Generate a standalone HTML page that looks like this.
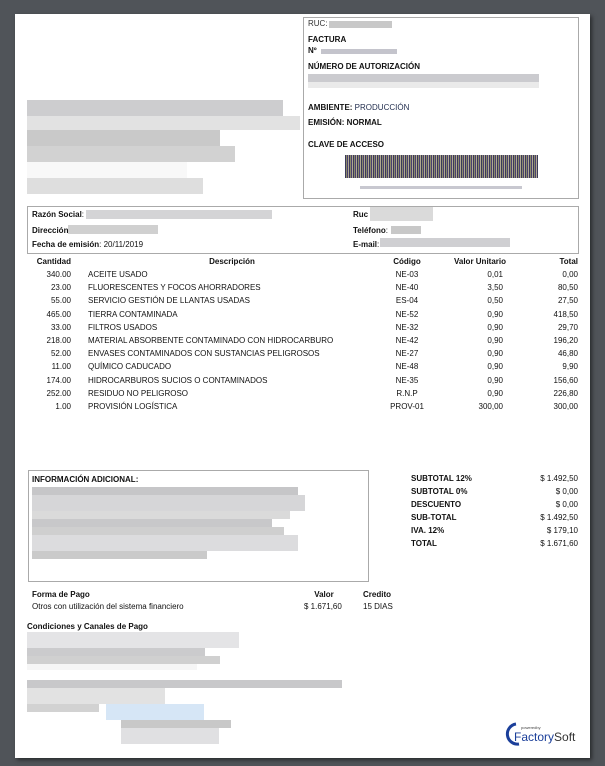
<!DOCTYPE html>
<html><head><meta charset="utf-8"><style>
*{margin:0;padding:0;box-sizing:border-box}
body{width:605px;height:766px;background:#505459;position:relative;overflow:hidden;font-family:"Liberation Sans",sans-serif;font-size:8px;color:#111}
.pg{position:absolute;left:15px;top:14px;width:575px;height:744px;background:#fff;box-shadow:2px 2px 4px rgba(0,0,0,.5)}
.a{position:absolute;white-space:nowrap;line-height:10px}
.b{font-weight:bold}
.r{text-align:right}
.c{text-align:center}
.g{position:absolute}
.box{position:absolute;border:1px solid #aaa}
</style></head><body>
<div class="pg"></div>
<!-- left header blur -->
<div class="g" style="left:27px;top:100px;width:256px;height:16px;background:#cdcdcf"></div>
<div class="g" style="left:27px;top:116px;width:273px;height:14px;background:#e2e2e2"></div>
<div class="g" style="left:27px;top:130px;width:193px;height:16px;background:#c9c9c9"></div>
<div class="g" style="left:27px;top:146px;width:208px;height:16px;background:#d2d2d2"></div>
<div class="g" style="left:27px;top:162px;width:160px;height:16px;background:#f8f8f8"></div>
<div class="g" style="left:27px;top:178px;width:176px;height:16px;background:#dedede"></div>

<div class="box" style="left:303px;top:17px;width:276px;height:182px"></div>
<div class="a" style="left:308px;top:19px;color:#333">RUC:</div>
<div class="g" style="left:329px;top:21px;width:63px;height:7px;background:#c8c8c8"></div>
<div class="a b" style="left:308px;top:35px">FACTURA</div>
<div class="a b" style="left:308px;top:46px">Nº</div>
<div class="g" style="left:321px;top:49px;width:76px;height:5px;background:#c4c4cc"></div>
<div class="a b" style="left:308px;top:62px">NÚMERO DE AUTORIZACIÓN</div>
<div class="g" style="left:308px;top:74px;width:231px;height:8px;background:#cbcbcf"></div>
<div class="g" style="left:308px;top:82px;width:231px;height:6px;background:#eaeaea"></div>
<div class="a" style="left:308px;top:103px;color:#1f2b4c"><b style="color:#111">AMBIENTE:</b> PRODUCCIÓN</div>
<div class="a b" style="left:308px;top:118px">EMISIÓN: NORMAL</div>
<div class="a b" style="left:308px;top:140px">CLAVE DE ACCESO</div>
<div class="g" style="left:345px;top:155px;width:193px;height:23px;background:repeating-linear-gradient(90deg,#3a3a5a 0 1px,#8a8a6a 1px 2px,#4a4070 2px 3px,#b0a890 3px 4px)"></div>
<div class="g" style="left:360px;top:186px;width:162px;height:3px;background:#c8c8d0"></div>

<div class="box" style="left:27px;top:206px;width:552px;height:48px"></div>
<div class="a" style="left:32px;top:210px"><b>Razón Social</b>:</div>
<div class="g" style="left:86px;top:210px;width:186px;height:9px;background:#d4d4d6"></div>
<div class="a" style="left:32px;top:226px"><b>Dirección</b>:</div>
<div class="g" style="left:68px;top:225px;width:90px;height:9px;background:#d0d0d0"></div>
<div class="a" style="left:32px;top:240px"><b>Fecha de emisión</b>: 20/11/2019</div>
<div class="a b" style="left:353px;top:210px">Ruc</div>
<div class="g" style="left:370px;top:207px;width:63px;height:14px;background:#dadada"></div>
<div class="a" style="left:353px;top:226px"><b>Teléfono</b>:</div>
<div class="g" style="left:391px;top:226px;width:30px;height:8px;background:#c8c8c8"></div>
<div class="a" style="left:353px;top:240px"><b>E-mail</b>:</div>
<div class="g" style="left:380px;top:238px;width:130px;height:9px;background:#cfcfd2"></div>

<div class="a b r" style="left:20px;width:51px;top:257px">Cantidad</div>
<div class="a b c" style="left:132px;width:200px;top:257px">Descripción</div>
<div class="a b c" style="left:377px;width:60px;top:257px">Código</div>
<div class="a b c" style="left:440px;width:80px;top:257px">Valor Unitario</div>
<div class="a b r" style="left:520px;width:58px;top:257px">Total</div>
<div style="position:absolute;left:0;top:268px;width:605px;line-height:13.2px">
<div style="position:absolute;left:20px;width:51px;text-align:right">340.00<br>23.00<br>55.00<br>465.00<br>33.00<br>218.00<br>52.00<br>11.00<br>174.00<br>252.00<br>1.00</div>
<div style="position:absolute;left:88px;white-space:nowrap">ACEITE USADO<br>FLUORESCENTES Y FOCOS AHORRADORES<br>SERVICIO GESTIÓN DE LLANTAS USADAS<br>TIERRA CONTAMINADA<br>FILTROS USADOS<br>MATERIAL ABSORBENTE CONTAMINADO CON HIDROCARBURO<br>ENVASES CONTAMINADOS CON SUSTANCIAS PELIGROSOS<br>QUÍMICO CADUCADO<br>HIDROCARBUROS SUCIOS O CONTAMINADOS<br>RESIDUO NO PELIGROSO<br>PROVISIÓN LOGÍSTICA</div>
<div style="position:absolute;left:377px;width:60px;text-align:center">NE-03<br>NE-40<br>ES-04<br>NE-52<br>NE-32<br>NE-42<br>NE-27<br>NE-48<br>NE-35<br>R.N.P<br>PROV-01</div>
<div style="position:absolute;left:440px;width:63px;text-align:right">0,01<br>3,50<br>0,50<br>0,90<br>0,90<br>0,90<br>0,90<br>0,90<br>0,90<br>0,90<br>300,00</div>
<div style="position:absolute;left:520px;width:58px;text-align:right">0,00<br>80,50<br>27,50<br>418,50<br>29,70<br>196,20<br>46,80<br>9,90<br>156,60<br>226,80<br>300,00</div>
</div>

<div class="box" style="left:28px;top:470px;width:341px;height:112px"></div>
<div class="a b" style="left:32px;top:475px">INFORMACIÓN ADICIONAL:</div>
<div class="g" style="left:32px;top:487px;width:266px;height:8px;background:#c6c6c8"></div>
<div class="g" style="left:32px;top:495px;width:273px;height:16px;background:#d6d6d8"></div>
<div class="g" style="left:32px;top:511px;width:258px;height:8px;background:#dadada"></div>
<div class="g" style="left:32px;top:519px;width:240px;height:8px;background:#c8c8ca"></div>
<div class="g" style="left:32px;top:527px;width:252px;height:8px;background:#cfcfcf"></div>
<div class="g" style="left:32px;top:535px;width:266px;height:16px;background:#dcdcde"></div>
<div class="g" style="left:32px;top:551px;width:175px;height:8px;background:#cacaca"></div>

<div class="a b" style="left:411px;top:472px;line-height:13px">SUBTOTAL 12%<br>SUBTOTAL 0%<br>DESCUENTO<br>SUB-TOTAL<br>IVA. 12%<br>TOTAL</div>
<div class="a r" style="left:500px;width:78px;top:472px;line-height:13px">$ 1.492,50<br>$ 0,00<br>$ 0,00<br>$ 1.492,50<br>$ 179,10<br>$ 1.671,60</div>

<div class="a b" style="left:32px;top:590px">Forma de Pago</div>
<div class="a" style="left:32px;top:602px">Otros con utilización del sistema financiero</div>
<div class="a b c" style="left:299px;width:50px;top:590px">Valor</div>
<div class="a" style="left:304px;top:602px">$ 1.671,60</div>
<div class="a b" style="left:363px;top:590px">Credito</div>
<div class="a" style="left:363px;top:602px">15 DIAS</div>
<div class="a b" style="left:27px;top:622px">Condiciones y Canales de Pago</div>
<div class="g" style="left:27px;top:632px;width:212px;height:16px;background:#e4e4e6"></div>
<div class="g" style="left:27px;top:648px;width:178px;height:8px;background:#cbcbcd"></div>
<div class="g" style="left:27px;top:656px;width:193px;height:8px;background:#d0d0d0"></div>
<div class="g" style="left:27px;top:664px;width:170px;height:6px;background:#f6f6f6"></div>
<div class="g" style="left:27px;top:680px;width:315px;height:8px;background:#c8c8ca"></div>
<div class="g" style="left:27px;top:688px;width:138px;height:16px;background:#e2e2e2"></div>
<div class="g" style="left:27px;top:704px;width:72px;height:8px;background:#d2d2d2"></div>
<div class="g" style="left:106px;top:704px;width:98px;height:16px;background:#d6e6f6"></div>
<div class="g" style="left:121px;top:720px;width:110px;height:8px;background:#c8c8c8"></div>
<div class="g" style="left:121px;top:728px;width:98px;height:16px;background:#e0e0e2"></div>

<svg class="g" style="left:505px;top:722px" width="72" height="24" viewBox="0 0 72 24">
<path d="M11 2 A10 10 0 1 0 14 22" fill="none" stroke="#1b3f9a" stroke-width="3"/>
<text x="16" y="7" font-size="4" fill="#444" font-family="Liberation Sans">poweredby</text>
<text x="9" y="19" font-size="12" fill="#1b3f9a" font-family="Liberation Sans">Factory<tspan fill="#333">Soft</tspan></text>
</svg>
</body></html>
